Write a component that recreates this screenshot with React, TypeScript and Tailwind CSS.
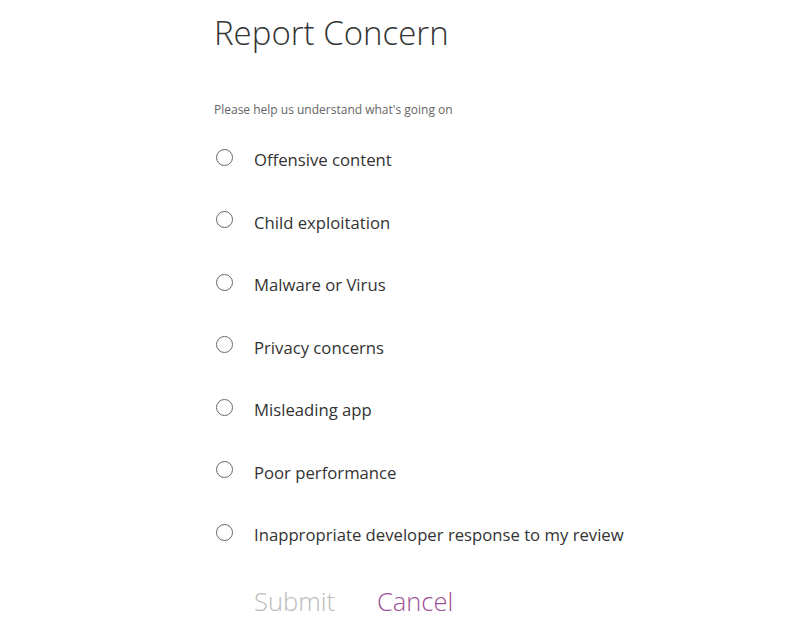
const reasons = [
  "Offensive content",
  "Child exploitation",
  "Malware or Virus",
  "Privacy concerns",
  "Misleading app",
  "Poor performance",
  "Inappropriate developer response to my review",
];

export default function App() {
  return (
    <div className="w-[800px] h-[630px] bg-white overflow-hidden font-['Open_Sans',sans-serif]">
      <div className="pl-[214px] pt-[10px]">
        <h1 className="text-[33px] font-light text-[#333] leading-[46px]">Report Concern</h1>
        <p className="mt-[46px] text-[12px] text-[#666] leading-[16px]">
          Please help us understand what's going on
        </p>
        <div className="mt-[30px] flex flex-col gap-[38.5px]">
          {reasons.map((r) => (
            <label key={r} className="flex items-center h-[24px] cursor-pointer">
              <span className="w-[17px] h-[17px] rounded-full border-[1.5px] border-[#666] ml-[2px] -mt-[6px]" />
              <span className="ml-[21px] text-[16.7px] text-[#333]">{r}</span>
            </label>
          ))}
        </div>
        <div className="mt-[37px] ml-[40px] flex gap-[42px] text-[25.5px] font-light leading-[34px]">
          <button className="text-[#bbb]">Submit</button>
          <button className="text-[#9c4f96]">Cancel</button>
        </div>
      </div>
    </div>
  );
}
